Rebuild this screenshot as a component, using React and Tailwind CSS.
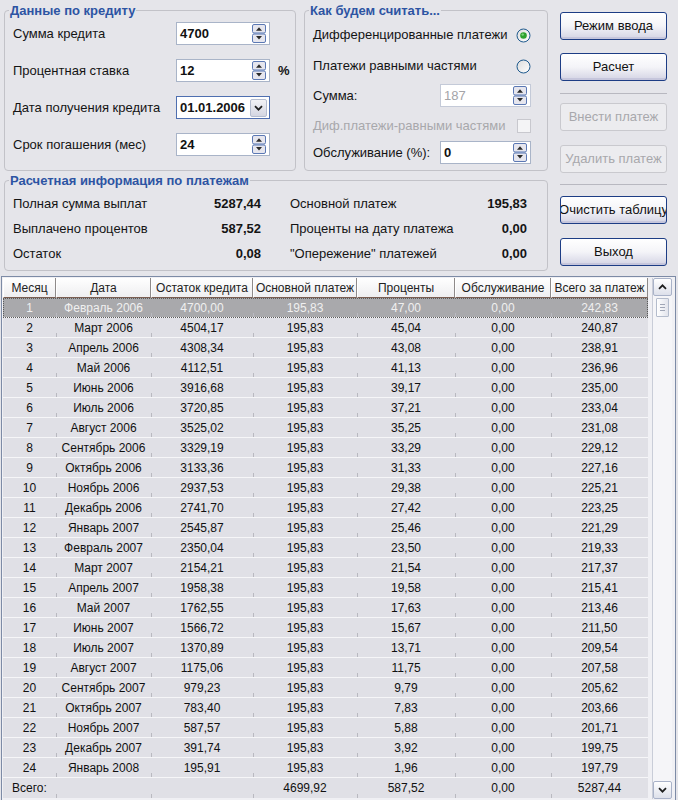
import React from "react";

const rows = [
  [1, "Февраль 2006", "4700,00", "195,83", "47,00", "0,00", "242,83"],
  [2, "Март 2006", "4504,17", "195,83", "45,04", "0,00", "240,87"],
  [3, "Апрель 2006", "4308,34", "195,83", "43,08", "0,00", "238,91"],
  [4, "Май 2006", "4112,51", "195,83", "41,13", "0,00", "236,96"],
  [5, "Июнь 2006", "3916,68", "195,83", "39,17", "0,00", "235,00"],
  [6, "Июль 2006", "3720,85", "195,83", "37,21", "0,00", "233,04"],
  [7, "Август 2006", "3525,02", "195,83", "35,25", "0,00", "231,08"],
  [8, "Сентябрь 2006", "3329,19", "195,83", "33,29", "0,00", "229,12"],
  [9, "Октябрь 2006", "3133,36", "195,83", "31,33", "0,00", "227,16"],
  [10, "Ноябрь 2006", "2937,53", "195,83", "29,38", "0,00", "225,21"],
  [11, "Декабрь 2006", "2741,70", "195,83", "27,42", "0,00", "223,25"],
  [12, "Январь 2007", "2545,87", "195,83", "25,46", "0,00", "221,29"],
  [13, "Февраль 2007", "2350,04", "195,83", "23,50", "0,00", "219,33"],
  [14, "Март 2007", "2154,21", "195,83", "21,54", "0,00", "217,37"],
  [15, "Апрель 2007", "1958,38", "195,83", "19,58", "0,00", "215,41"],
  [16, "Май 2007", "1762,55", "195,83", "17,63", "0,00", "213,46"],
  [17, "Июнь 2007", "1566,72", "195,83", "15,67", "0,00", "211,50"],
  [18, "Июль 2007", "1370,89", "195,83", "13,71", "0,00", "209,54"],
  [19, "Август 2007", "1175,06", "195,83", "11,75", "0,00", "207,58"],
  [20, "Сентябрь 2007", "979,23", "195,83", "9,79", "0,00", "205,62"],
  [21, "Октябрь 2007", "783,40", "195,83", "7,83", "0,00", "203,66"],
  [22, "Ноябрь 2007", "587,57", "195,83", "5,88", "0,00", "201,71"],
  [23, "Декабрь 2007", "391,74", "195,83", "3,92", "0,00", "199,75"],
  [24, "Январь 2008", "195,91", "195,83", "1,96", "0,00", "197,79"],
];

const widths = [53, 95, 102, 104, 98, 96, 97];
const headers = ["Месяц", "Дата", "Остаток кредита", "Основной платеж", "Проценты", "Обслуживание", "Всего за платеж"];

function Spinner() {
  return (
    <svg width="16" height="19" viewBox="0 0 16 19">
      <rect x="1.5" y="0.5" width="13" height="8.5" rx="1.5" fill="#e6e6ee" stroke="#5b78b4" />
      <path d="M5 6.8 L8 3.2 L11 6.8Z" fill="#2a2a2a" />
      <rect x="1.5" y="10" width="13" height="8.5" rx="1.5" fill="#e6e6ee" stroke="#5b78b4" />
      <path d="M5 12 L8 15.6 L11 12Z" fill="#2a2a2a" />
    </svg>
  );
}

function NumField({ value, width, disabled }) {
  return (
    <div
      className={
        disabled
          ? "flex h-[23px] items-center justify-between border border-[#c4cad8] bg-white pl-[3px] pr-[2px]"
          : "flex h-[23px] items-center justify-between border border-[#a9b4c8] bg-white pl-[3px] pr-[2px]"
      }
      style={{ width }}
    >
      <span className={disabled ? "text-[13px] text-[#a4a4a8]" : "text-[13px] font-bold text-[#111]"}>{value}</span>
      <Spinner />
    </div>
  );
}

function Radio({ checked }) {
  return (
    <svg width="15" height="15" viewBox="0 0 15 15">
      <defs>
        <linearGradient id={checked ? "rg1" : "rg2"} x1="0" y1="0" x2="1" y2="1">
          <stop offset="0" stopColor="#dcdcdc" />
          <stop offset="1" stopColor="#ffffff" />
        </linearGradient>
      </defs>
      <circle cx="7.5" cy="7.5" r="6.5" fill={`url(#${checked ? "rg1" : "rg2"})`} stroke="#1f5a8e" strokeWidth="1" />
      {checked && <circle cx="7.5" cy="7.5" r="3.3" fill="#2ea22e" />}
      {checked && <circle cx="6.7" cy="6.6" r="1.2" fill="#7fd47f" />}
    </svg>
  );
}

function Btn({ children, disabled }) {
  return disabled ? (
    <div className="flex h-[28px] w-[107px] items-center justify-center overflow-hidden whitespace-nowrap rounded-[3px] border border-[#c9c9ce] bg-[#ececef] text-[13px] text-[#a8a8ac]">
      {children}
    </div>
  ) : (
    <div className="flex h-[28px] w-[107px] items-center justify-center overflow-hidden whitespace-nowrap rounded-[3px] border border-[#1d3d85] bg-linear-to-b from-white via-[#f4f4f8] to-[#d4d4e4] text-[13px] text-[#111] shadow-[inset_0_-2px_0_#c6c6dc]">
      {children}
    </div>
  );
}

function Caret({ down }) {
  return (
    <svg width="9" height="6" viewBox="0 0 9 6">
      <path d={down ? "M1 1.2 L4.5 4.7 L8 1.2" : "M1 4.8 L4.5 1.3 L8 4.8"} stroke="#1e1e1e" strokeWidth="1.7" fill="none" />
    </svg>
  );
}

function Cell({ i, children, className }) {
  return (
    <div className={"relative flex h-full items-center justify-center " + (className || "")} style={{ width: widths[i] }}>
      {i > 0 && <span className="absolute bottom-0 left-0 h-[4px] w-px bg-[#b9b9c0]" />}
      {children}
    </div>
  );
}

export default function App() {
  return (
    <div className="h-[800px] w-[678px] overflow-hidden bg-[#e5e5ea] font-['Liberation_Sans',Arial,sans-serif] text-[#141414]">
      {/* top area */}
      <div className="flex h-[276px] pl-[4px]">
        <div className="flex w-[544px] flex-col pt-[3px]">
          <div className="flex">
            <fieldset className="h-[168px] w-[292px] rounded-[4px] border border-[#c2c2c8]">
              <legend className="ml-[4px] px-[1px] text-[13px] font-bold leading-[15px] text-[#2d54a3]">Данные по кредиту</legend>
              <div className="flex flex-col gap-[14px] pl-[8px] pt-[4px]">
                <div className="flex h-[23px] items-center">
                  <span className="w-[163px] text-[13px]">Сумма кредита</span>
                  <NumField value="4700" width={94} />
                </div>
                <div className="flex h-[23px] items-center">
                  <span className="w-[163px] text-[13px]">Процентная ставка</span>
                  <NumField value="12" width={94} />
                  <span className="ml-[8px] text-[13px] font-bold">%</span>
                </div>
                <div className="flex h-[23px] items-center">
                  <span className="w-[163px] text-[13px]">Дата получения кредита</span>
                  <div className="flex h-[23px] w-[94px] items-center justify-between border border-[#4f6fb0] bg-white pl-[3px] pr-[2px]">
                    <span className="text-[13px] font-bold">01.01.2006</span>
                    <div className="flex h-[18px] w-[17px] items-center justify-center rounded-[2px] border border-[#b4bccf] bg-linear-to-b from-[#f2f2f6] to-[#d4d6e2]">
                      <Caret down />
                    </div>
                  </div>
                </div>
                <div className="flex h-[23px] items-center">
                  <span className="w-[163px] text-[13px]">Срок погашения (мес)</span>
                  <NumField value="24" width={94} />
                </div>
              </div>
            </fieldset>
            <fieldset className="ml-[8px] h-[168px] w-[244px] rounded-[4px] border border-[#c2c2c8]">
              <legend className="ml-[4px] px-[1px] text-[13px] font-bold leading-[15px] text-[#2d54a3]">Как будем считать...</legend>
              <div className="flex flex-col pl-[8px] pr-[16px]">
                <div className="mt-[6px] flex h-[22px] items-center justify-between">
                  <span className="text-[13px]">Дифференцированные платежи</span>
                  <Radio checked />
                </div>
                <div className="mt-[9px] flex h-[22px] items-center justify-between">
                  <span className="text-[13px]">Платежи равными частями</span>
                  <Radio />
                </div>
                <div className="mt-[7px] flex h-[23px] items-center justify-between">
                  <span className="text-[13px]">Сумма:</span>
                  <NumField value="187" width={91} disabled />
                </div>
                <div className="mt-[8px] flex h-[22px] items-center justify-between">
                  <span className="text-[13px] text-[#a8a8ac]">Диф.платежи-равными частями</span>
                  <div className="h-[14px] w-[14px] border border-[#c8c8ce] bg-[#f4f4f6]" />
                </div>
                <div className="mt-[4px] flex h-[23px] items-center justify-between">
                  <span className="text-[13px]">Обслуживание (%):</span>
                  <NumField value="0" width={91} />
                </div>
              </div>
            </fieldset>
          </div>
          <fieldset className="mt-[2px] h-[98px] w-[544px] rounded-[4px] border border-[#c2c2c8]">
            <legend className="ml-[4px] px-[1px] text-[13px] font-bold leading-[15px] text-[#2d54a3]">Расчетная информация по платежам</legend>
            <div className="flex pl-[8px] pt-[3px] text-[13px]">
              <div className="flex w-[248px] flex-col">
                <div className="flex h-[25px] items-center justify-between">
                  <span>Полная сумма выплат</span>
                  <span className="font-bold">5287,44</span>
                </div>
                <div className="flex h-[25px] items-center justify-between">
                  <span>Выплачено процентов</span>
                  <span className="font-bold">587,52</span>
                </div>
                <div className="flex h-[25px] items-center justify-between">
                  <span>Остаток</span>
                  <span className="font-bold">0,08</span>
                </div>
              </div>
              <div className="ml-[29px] flex w-[237px] flex-col">
                <div className="flex h-[25px] items-center justify-between">
                  <span>Основной платеж</span>
                  <span className="font-bold">195,83</span>
                </div>
                <div className="flex h-[25px] items-center justify-between">
                  <span>Проценты на дату платежа</span>
                  <span className="font-bold">0,00</span>
                </div>
                <div className="flex h-[25px] items-center justify-between">
                  <span>"Опережение" платежей</span>
                  <span className="font-bold">0,00</span>
                </div>
              </div>
            </div>
          </fieldset>
        </div>
        <div className="ml-[12px] flex flex-col pt-[12px]">
          <Btn>Режим ввода</Btn>
          <div className="mt-[13px]">
            <Btn>Расчет</Btn>
          </div>
          <div className="mt-[12px] h-[1px] w-[107px] bg-[#b8b8c0]" />
          <div className="mt-[9px]">
            <Btn disabled>Внести платеж</Btn>
          </div>
          <div className="mt-[14px]">
            <Btn disabled>Удалить платеж</Btn>
          </div>
          <div className="mt-[11px] h-[1px] w-[107px] bg-[#b8b8c0]" />
          <div className="mt-[11px]">
            <Btn>Очистить таблицу</Btn>
          </div>
          <div className="mt-[14px]">
            <Btn>Выход</Btn>
          </div>
        </div>
      </div>

      {/* table */}
      <div className="ml-[1px] flex h-[524px] w-[675px] border-l border-r border-t border-[#7d8ba6] bg-[#f0f0f4] pl-[1px] pt-[1px]">
        <div className="flex w-[645px] flex-col text-[12px]">
          <div className="flex h-[20px]">
            {headers.map((h, i) => (
              <div
                key={h}
                className="flex h-full items-center justify-center border-b border-r border-b-[#7a5e52] border-r-[#8e8a8a] border-l border-l-white bg-linear-to-b from-white to-[#eeeef0] text-[#222]"
                style={{ width: widths[i] }}
              >
                {h}
              </div>
            ))}
          </div>
          {rows.map((r, ri) => {
            const sel = ri === 0;
            return (
              <div
                key={ri}
                className={
                  sel
                    ? "flex h-[20px] border-b border-[#f6f6f8] bg-[#a9a9ac] text-[#f0f0f0] outline-1 -outline-offset-1 outline-dotted outline-[#5a5a5a]"
                    : "flex h-[20px] border-b border-[#f6f6f8] bg-[#e0e0e6] text-[#111]"
                }
              >
                {r.map((v, i) => (
                  <Cell key={i} i={i}>
                    {v}
                  </Cell>
                ))}
              </div>
            );
          })}
          <div className="flex h-[20px] bg-[#e0e0e6] text-[#111]">
            <Cell i={0} className="!justify-start pl-[9px]">
              Всего:
            </Cell>
            <Cell i={1}></Cell>
            <Cell i={2}></Cell>
            <Cell i={3}>4699,92</Cell>
            <Cell i={4}>587,52</Cell>
            <Cell i={5}>0,00</Cell>
            <Cell i={6}>5287,44</Cell>
          </div>
        </div>
        <div className="ml-[4px] flex h-[521px] w-[20px] flex-col border-l border-[#c9cdd8] bg-[#f5f5f8]">
          <div className="flex h-[18px] w-full items-center justify-center rounded-[2px] border border-[#a9b2c8] bg-linear-to-b from-white to-[#dde0ea]">
            <Caret />
          </div>
          <div className="mx-auto mt-[2px] flex h-[19px] w-[13px] flex-col items-center justify-center gap-[2px] rounded-[1px] border border-[#b4bccc] bg-linear-to-r from-white to-[#e2e4ec]">
            <span className="h-px w-[5px] bg-[#a0a6b6]" />
            <span className="h-px w-[5px] bg-[#a0a6b6]" />
            <span className="h-px w-[5px] bg-[#a0a6b6]" />
          </div>
          <div className="flex-1" />
          <div className="flex h-[18px] w-full items-center justify-center rounded-[2px] border border-[#a9b2c8] bg-linear-to-b from-white to-[#dde0ea]">
            <Caret down />
          </div>
        </div>
      </div>
    </div>
  );
}
